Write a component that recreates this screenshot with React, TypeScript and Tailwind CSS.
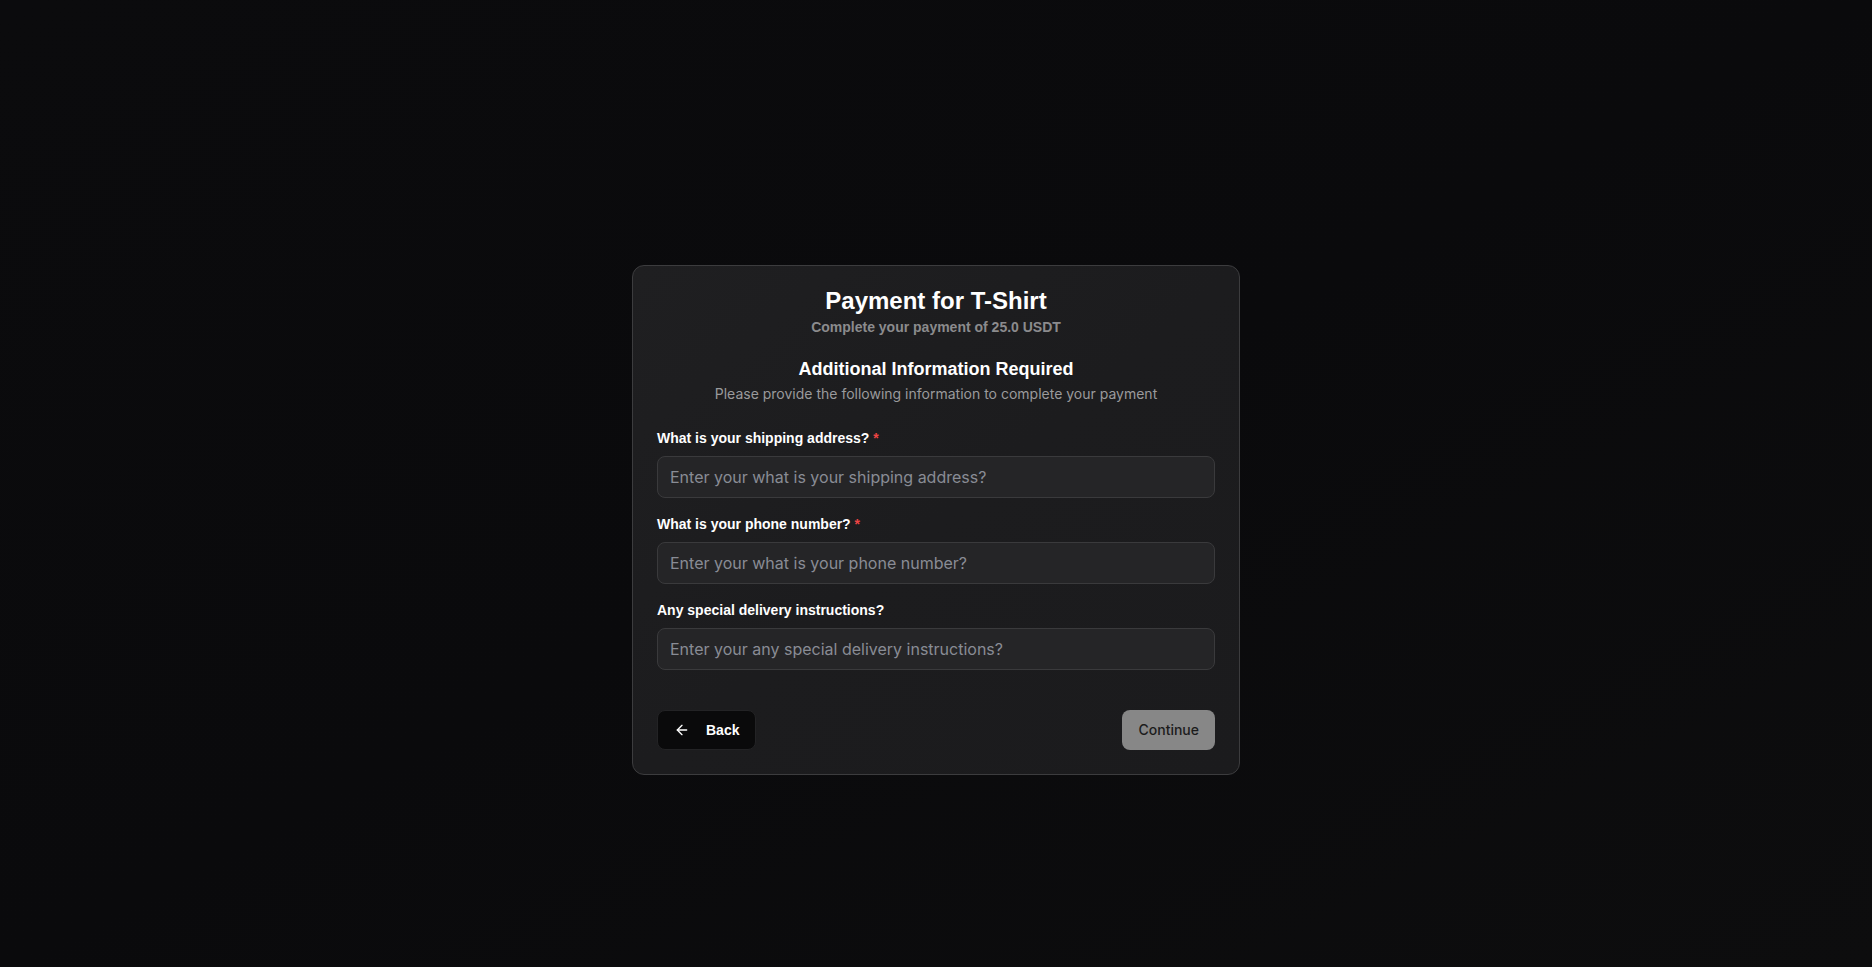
import React from "react";
import { ArrowLeft } from "lucide-react";

function Field({ label, required, placeholder }: { label: string; required?: boolean; placeholder: string }) {
  return (
    <div className="flex flex-col">
      <label className="text-sm leading-5 font-bold text-white font-['Liberation_Sans',Arial,sans-serif]">
        {label}
        {required && <span className="text-[#ef4444]"> *</span>}
      </label>
      <input
        type="text"
        placeholder={placeholder}
        className="mt-2 h-[42px] w-full rounded-lg border border-[#3a3a3c] bg-[#252527] px-3 text-base text-white placeholder:text-[#898c95] outline-none font-['Inter','Noto_Sans',sans-serif]"
      />
    </div>
  );
}

export default function App() {
  return (
    <div className="min-h-screen w-full bg-linear-to-br from-[#0b0b0d] via-[#0a0a0c] to-[#0d0d0e] flex justify-center items-center pt-[72px]">
      <div className="w-[608px] rounded-xl border border-[#3c3c3e] bg-linear-to-br from-[#1f1f21] via-[#1c1c1e] to-[#1b1b1d] px-6 pt-[23px] pb-6 flex flex-col">
        <h1 className="text-center text-2xl leading-6 font-bold text-white font-['Liberation_Sans',Arial,sans-serif]">
          Payment for T-Shirt
        </h1>
        <p className="mt-1 text-center text-sm leading-5 font-bold text-[#8b8b8d] font-['Liberation_Sans',Arial,sans-serif]">
          Complete your payment of 25.0 USDT
        </p>
        <h2 className="mt-[18px] text-center text-lg leading-7 font-bold text-white font-['Liberation_Sans',Arial,sans-serif]">
          Additional Information Required
        </h2>
        <p className="mt-px text-center text-sm leading-5 text-[#9a9a9c] font-['Inter','Noto_Sans',sans-serif]">
          Please provide the following information to complete your payment
        </p>
        <div className="mt-6 flex flex-col gap-4">
          <Field label="What is your shipping address?" required placeholder="Enter your what is your shipping address?" />
          <Field label="What is your phone number?" required placeholder="Enter your what is your phone number?" />
          <Field label="Any special delivery instructions?" placeholder="Enter your any special delivery instructions?" />
        </div>
        <div className="mt-10 flex items-center justify-between">
          <button className="h-10 flex items-center gap-4 rounded-lg border border-[#232325] bg-[#0a0a0b] px-4 text-sm font-bold text-white font-['Liberation_Sans',Arial,sans-serif]">
            <ArrowLeft size={16} strokeWidth={2} />
            Back
          </button>
          <button className="h-10 rounded-lg bg-[#878787] px-4 text-sm font-medium text-[#1c1c1c] font-['Inter','Noto_Sans',sans-serif]">
            Continue
          </button>
        </div>
      </div>
    </div>
  );
}
